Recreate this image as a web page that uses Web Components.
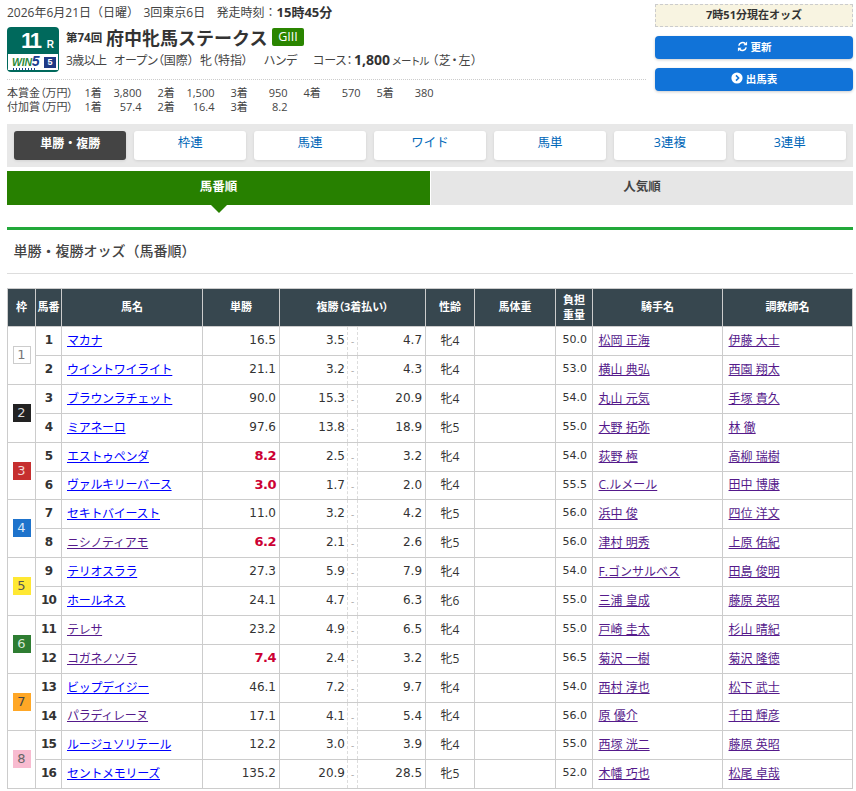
<!DOCTYPE html>
<html lang="ja">
<head>
<meta charset="utf-8">
<title>単勝・複勝オッズ</title>
<style>
  html,body{margin:0;padding:0;background:#fff}
  body{font-family:"Open Sans","Noto Sans CJK JP",sans-serif;color:#333;font-size:12px}
  race-page{margin-left:7px}
</style>
</head>
<body>
<race-page></race-page>
<script>
const FONT = '"Open Sans","Noto Sans CJK JP",sans-serif';
const NUM = '"DejaVu Sans","Noto Sans CJK JP",sans-serif';

class Win5Badge extends HTMLElement{
  constructor(){super();this.attachShadow({mode:'open'}).innerHTML=`
  <style>
    :host{display:flex;flex-direction:column;width:52px;height:45px;box-sizing:border-box;background:#00695c;border-radius:4px;padding:1px 1px 2px;font-family:${FONT}}
    .r{flex:1;display:flex;align-items:baseline;color:#fff;font-weight:700;line-height:25px;height:25px;padding-left:13px;font-family:"Liberation Sans",sans-serif}
    .n{font-size:22px;letter-spacing:-2.2px;margin-right:7px}
    .u{font-size:10px}
    .w{height:16px;flex:none;background:#fff;display:flex;align-items:center;gap:2px;padding:0 2px 0 3px;box-sizing:border-box}
    .logo{flex:1;height:15px;font:italic 700 10.5px/12px "Liberation Sans",sans-serif;letter-spacing:-.2px;color:#2c8a3a;white-space:nowrap;padding-left:1px}
    .logo b{color:#1a3d8f;font-size:14px}
    .dots{display:block;height:2px;margin-top:0;background:radial-gradient(circle,#1a3d8f 0 1px,transparent 1.1px) 0 0/3px 2px repeat-x;width:25px}
    .box{width:12px;height:11px;background:#1e3a86;color:#fff;font:700 9px/11px "Liberation Sans",sans-serif;text-align:center}
  </style>
  <div class="r"><span class="n">11</span><span class="u">R</span></div>
  <div class="w"><div class="logo">WIN<b>5</b><span class="dots"></span></div><div class="box">5</div></div>`}
}
customElements.define('win5-badge',Win5Badge);

class PrizeRow extends HTMLElement{
  constructor(){super();
    const label=this.getAttribute('label');
    const items=JSON.parse(this.getAttribute('items'));
    this.attachShadow({mode:'open'}).innerHTML=`
    <style>
      :host{display:grid;grid-template-columns:61.5px repeat(5,57px);column-gap:16px;font-size:11px;line-height:14px;color:#444;white-space:nowrap}
      .l{font-feature-settings:"palt"}
      .c{display:flex;justify-content:space-between}
    </style>
    <div class="l">${label}</div>
    ${items.map((v,i)=>`<div class="c"><span>${i+1}着</span><span>${v}</span></div>`).join('')}`;
  }
}
customElements.define('prize-row',PrizeRow);

class RaceInfo extends HTMLElement{
  constructor(){super();this.attachShadow({mode:'open'}).innerHTML=`
  <style>
    :host{display:block;box-sizing:border-box;width:639px;height:124px;color:#444;font-size:12px}
    .top{height:27px;line-height:24px;white-space:nowrap;color:#444}
    .top span{display:inline-block}
    .top b{font-size:13px;color:#333}
    .mid{display:flex;gap:7px;height:52px;border-bottom:1px dotted #ccc}
    .txt{flex:1;min-width:0}
    .t1{display:flex;align-items:center;height:20px;white-space:nowrap;color:#333}
    .t1 .k{font-size:11.5px;font-weight:700;width:40px;flex:none}
    .t1 .n{font-size:18px;font-weight:700;color:#333;width:166px;flex:none}
    .g{width:32px;height:18px;background:#2a8500;color:#fff;border-radius:2px;font-size:12.5px;line-height:18px;text-align:center}
    .t2{height:26px;line-height:25px;white-space:nowrap;font-size:12px;display:flex;align-items:baseline}
    .t2 span{display:block;flex:none;font-feature-settings:"palt"}
    .t2 b{font-size:14px;color:#333}
    .pr{display:block;padding-top:6px}
  </style>
  <div class="top"><span style="width:136.5px">2026年6月21日（日曜）</span><span style="width:73px">3回東京6日</span><span>発走時刻：<b>15時45分</b></span></div>
  <div class="mid">
    <win5-badge></win5-badge>
    <div class="txt">
      <div class="t1"><span class="k">第74回</span><span class="n">府中牝馬ステークス</span><span class="g">GIII</span></div>
      <div class="t2"><span style="width:48px;font-feature-settings:normal;letter-spacing:-.6px">3歳以上</span><span style="width:86px">オープン（国際）</span><span style="width:64px">牝（特指）</span><span style="width:49px">ハンデ</span><span style="width:41px">コース：</span><b>1,800</b><span style="font-size:10.5px;margin-left:2px;width:40px">メートル</span><span style="letter-spacing:.8px">（芝・左）</span></div>
    </div>
  </div>
  <div class="pr">
    <prize-row label="本賞金（万円）" items='["3,800","1,500","950","570","380"]'></prize-row>
    <prize-row label="付加賞（万円）" items='["57.4","16.4","8.2"]'></prize-row>
  </div>`}
}
customElements.define('race-info',RaceInfo);

class BlueButton extends HTMLElement{
  constructor(){super();this.attachShadow({mode:'open'}).innerHTML=`
  <style>
    :host{display:flex;height:23px;box-sizing:border-box;padding-bottom:3px;align-items:center;justify-content:center;gap:3px;background:#1173d8;color:#fff;border-radius:4px;font-weight:700;font-size:10.5px;box-shadow:0 1px 3px rgba(0,0,0,.2);font-family:${FONT}}
    ::slotted(svg){display:block}
  </style><slot name="i"></slot><slot></slot>`}
}
customElements.define('blue-button',BlueButton);

class OddsPanel extends HTMLElement{
  constructor(){super();this.attachShadow({mode:'open'}).innerHTML=`
  <style>
    :host{display:flex;flex-direction:column;width:198px;gap:9px;padding-top:4px;box-sizing:border-box}
    .now{height:23px;box-sizing:border-box;border:1px dashed #ccc;background:#f8f4e1;text-align:center;font-weight:700;font-size:11px;line-height:19px;color:#333}
  </style>
  <div class="now">7時51分現在オッズ</div>
  <blue-button><svg slot="i" width="11" height="11" viewBox="0 0 12 12"><path d="M2 5a4.2 4.2 0 0 1 7-2.2M10 7a4.2 4.2 0 0 1-7 2.2" fill="none" stroke="#fff" stroke-width="1.7"/><path d="M11 .6v4H7zM1 11.4v-4h4z" fill="#fff"/></svg>更新</blue-button>
  <blue-button><svg slot="i" width="12" height="12" viewBox="0 0 12 12"><circle cx="6" cy="6" r="5.6" fill="#fff"/><path d="M5 3.4 7.6 6 5 8.6" fill="none" stroke="#1173d8" stroke-width="1.6"/></svg>出馬表</blue-button>`}
}
customElements.define('odds-panel',OddsPanel);

class BetTabs extends HTMLElement{
  constructor(){super();
    const tabs=['単勝・複勝','枠連','馬連','ワイド','馬単','3連複','3連単'];
    this.attachShadow({mode:'open'}).innerHTML=`
  <style>
    :host{display:grid;grid-template-columns:repeat(7,1fr);column-gap:7.5px;padding:7px;background:#e8e8e8;height:43px;box-sizing:border-box;margin-bottom:4px}
    div{background:#fff;border-radius:3px;text-align:center;color:#0067b8;font-size:12.5px;line-height:24px;height:29px;box-shadow:0 1px 3px rgba(0,0,0,.1)}
    div.on{background:#444;color:#fff;font-weight:700;font-size:12px;line-height:25px}
  </style>
  ${tabs.map((t,i)=>`<div class="${i?'':'on'}">${t}</div>`).join('')}`}
}
customElements.define('bet-tabs',BetTabs);

class OrderTabs extends HTMLElement{
  constructor(){super();this.attachShadow({mode:'open'}).innerHTML=`
  <style>
    :host{display:grid;grid-template-columns:423px 1fr;column-gap:1px;height:56px;border-bottom:3px solid #22a83a;box-sizing:content-box}
    div{height:34px;line-height:31px;text-align:center;font-weight:700;font-size:12.5px;position:relative}
    .a{background:#278000;color:#fff}
    .a::after{content:"";position:absolute;left:50%;margin-left:-8px;top:34px;border:8px solid transparent;border-bottom:0;border-top-color:#278000}
    .b{background:#e6e6e6;color:#444}
  </style>
  <div class="a">馬番順</div><div class="b">人気順</div>`}
}
customElements.define('order-tabs',OrderTabs);

class SectionTitle extends HTMLElement{
  constructor(){super();this.attachShadow({mode:'open'}).innerHTML=`
  <style>
    :host{display:block;height:43px;box-sizing:content-box;border-bottom:1px solid #ddd;padding-left:6.5px;font-size:14px;font-weight:500;line-height:41px;color:#444;margin-bottom:14px}
  </style><slot></slot>`}
}
customElements.define('section-title',SectionTitle);

class FrameBadge extends HTMLElement{
  constructor(){super();
    const n=+this.getAttribute('n');
    const c={1:['#fff','#777','1px solid #ccc'],2:['#222','#ddd','0'],3:['#c62f2f','#f3d6d6','0'],4:['#1e73cc','#dbe9f8','0'],5:['#ffe833','#555','0'],6:['#2e7d32','#d6e8d6','0'],7:['#ffa726','#444','0'],8:['#f8bbd0','#666','0']}[n];
    this.attachShadow({mode:'open'}).innerHTML=`
    <style>:host{display:block;width:18px;height:18px;margin:0 auto;box-sizing:border-box;background:${c[0]};color:${c[1]};border:${c[2]};text-align:center;font:13px/${n==1?16:18}px ${NUM}}</style>${n}`}
}
customElements.define('frame-badge',FrameBadge);

class OddsTable extends HTMLElement{
  constructor(){super();
    const V=1,B=0;
    const rows=[
     ['マカナ',B,'16.5',0,'3.5','4.7','牝4','50.0','松岡 正海','伊藤 大士'],
     ['ウイントワイライト',B,'21.1',0,'3.2','4.3','牝4','53.0','横山 典弘','西園 翔太'],
     ['ブラウンラチェット',B,'90.0',0,'15.3','20.9','牝4','54.0','丸山 元気','手塚 貴久'],
     ['ミアネーロ',B,'97.6',0,'13.8','18.9','牝5','55.0','大野 拓弥','林 徹'],
     ['エストゥペンダ',B,'8.2',1,'2.5','3.2','牝4','54.0','荻野 極','高柳 瑞樹'],
     ['ヴァルキリーバース',B,'3.0',1,'1.7','2.0','牝4','55.5','C.ルメール','田中 博康'],
     ['セキトバイースト',B,'11.0',0,'3.2','4.2','牝5','56.0','浜中 俊','四位 洋文'],
     ['ニシノティアモ',V,'6.2',1,'2.1','2.6','牝5','56.0','津村 明秀','上原 佑紀'],
     ['テリオスララ',B,'27.3',0,'5.9','7.9','牝4','54.0','F.ゴンサルベス','田島 俊明'],
     ['ホールネス',B,'24.1',0,'4.7','6.3','牝6','55.0','三浦 皇成','藤原 英昭'],
     ['テレサ',V,'23.2',0,'4.9','6.5','牝4','55.0','戸崎 圭太','杉山 晴紀'],
     ['コガネノソラ',V,'7.4',1,'2.4','3.2','牝5','56.5','菊沢 一樹','菊沢 隆徳'],
     ['ビップデイジー',B,'46.1',0,'7.2','9.7','牝4','54.0','西村 淳也','松下 武士'],
     ['パラディレーヌ',V,'17.1',0,'4.1','5.4','牝4','56.0','原 優介','千田 輝彦'],
     ['ルージュソリテール',B,'12.2',0,'3.0','3.9','牝4','55.0','西塚 洸二','藤原 英昭'],
     ['セントメモリーズ',B,'135.2',0,'20.9','28.5','牝5','52.0','木幡 巧也','松尾 卓哉'],
    ];
    const body=rows.map((r,i)=>{
      const h=(i==5||i==13)?28:29;
      const fr=i%2==0?`<td class="fr" rowspan="2"><frame-badge n="${i/2+1}"></frame-badge></td>`:'';
      return `<tr style="height:${h}px">${fr}<td class="no">${i+1}</td><td class="nm h"><a class="${r[1]?'v':''}">${r[0]}</a></td><td class="n win${r[3]?' hot':''}">${r[2]}</td><td class="n pl">${r[4]}</td><td class="ds">-</td><td class="n pm">${r[5]}</td><td class="sx">${r[6]}</td><td></td><td class="wt">${r[7]}</td><td class="nm j"><a class="v">${r[8]}</a></td><td class="nm j"><a class="v">${r[9]}</a></td></tr>`;
    }).join('');
    this.attachShadow({mode:'open'}).innerHTML=`
  <style>
    :host{display:block;font-size:12px;color:#333}
    table{border-collapse:collapse;table-layout:fixed;width:846px}
    td,th{border:1px solid #ccc;padding:0;box-sizing:border-box}
    th{background:#37474f;color:#fff;font-size:11px;font-weight:700;line-height:15px;height:38px;padding-bottom:2px;font-feature-settings:"palt"}
    th.tt{font-size:11.5px;font-feature-settings:normal;padding:0 0 3px;line-height:14.5px}
    thead tr{height:38px}
    td{text-align:center;vertical-align:middle;line-height:16px}
    .fr{padding-bottom:1px}
    .no{font:700 12px/16px ${NUM};letter-spacing:-.9px;padding-bottom:2px}
    .nm{text-align:left;padding-left:5.5px;font-size:12px;padding-bottom:1px}
    .nm a{color:#00f;text-decoration:underline}
    .nm a.v{color:#551a8b}
    .h{padding-left:5px}
    .h a{letter-spacing:-.3px}
    .n{text-align:right;font:12px/16px ${NUM};padding:0 3px 2px 0}
    .pl{border-right:1px dashed #ddd;padding-right:2px}
    .pm{border-left:1px dashed #ddd}
    .ds{color:#aaa;font-size:10px;border-left:1px dashed #ddd;border-right:1px dashed #ddd}
    .hot{color:#cc0033;font-weight:700;font-size:13px;letter-spacing:-.5px}
    .wt{text-align:right;padding:0 5px 2px 0;font:11px/16px ${NUM}}
    .sx{font-size:12px;padding-bottom:1px}
  </style>
  <table>
    <colgroup><col style="width:28px"><col style="width:26px"><col style="width:141px"><col style="width:77px"><col style="width:68px"><col style="width:10px"><col style="width:68px"><col style="width:49px"><col style="width:81px"><col style="width:37px"><col style="width:130px"><col style="width:130px"></colgroup>
    <thead><tr><th>枠</th><th>馬番</th><th>馬名</th><th>単勝</th><th colspan="3">複勝（3着払い）</th><th>性齢</th><th>馬体重</th><th>負担<br>重量</th><th>騎手名</th><th>調教師名</th></tr></thead>
    <tbody>${body}</tbody>
  </table>`}
}
customElements.define('odds-table',OddsTable);

class RacePage extends HTMLElement{
  constructor(){super();this.attachShadow({mode:'open'}).innerHTML=`
  <style>
    :host{display:block;width:846px;font-family:${FONT};color:#333}
    .head{display:flex;justify-content:space-between;align-items:flex-start;height:124px}
  </style>
  <div class="head"><race-info></race-info><odds-panel></odds-panel></div>
  <bet-tabs></bet-tabs>
  <order-tabs></order-tabs>
  <section-title>単勝・複勝オッズ（馬番順）</section-title>
  <odds-table></odds-table>`}
}
customElements.define('race-page',RacePage);
</script>
</body>
</html>
